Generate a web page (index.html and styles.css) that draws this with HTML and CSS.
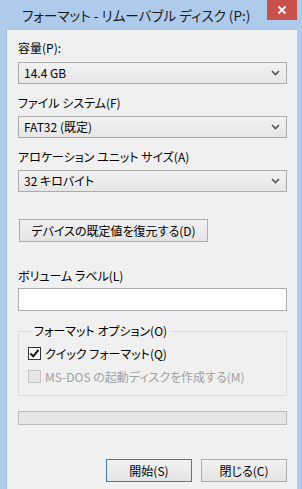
FILE: index.html
```html
<!DOCTYPE html>
<html lang="ja">
<head>
<meta charset="utf-8">
<link rel="stylesheet" href="styles.css">
</head>
<body>
<div class="window">
  <div class="titlebar">
    <div class="title">フォーマット - リムーバブル ディスク (P:)</div>
    <svg class="xbtn" width="30" height="20" viewBox="0 0 30 20"><rect x="0" y="0" width="30" height="20" fill="#c9514b"/><path d="M11.5 6.5 L18.5 13.5 M18.5 6.5 L11.5 13.5" stroke="#fff" stroke-width="1.8"/></svg>
  </div>
  <div class="client">
    <div class="label first">容量(P):</div>
    <div class="combo"><span>14.4 GB</span><svg class="chev" width="9" height="6" viewBox="0 0 9 6"><path d="M1 1 L4.5 4.5 L8 1" fill="none" stroke="#555" stroke-width="1.6"/></svg></div>
    <div class="label">ファイル システム(F)</div>
    <div class="combo"><span>FAT32 (既定)</span><svg class="chev" width="9" height="6" viewBox="0 0 9 6"><path d="M1 1 L4.5 4.5 L8 1" fill="none" stroke="#555" stroke-width="1.6"/></svg></div>
    <div class="label">アロケーション ユニット サイズ(A)</div>
    <div class="combo"><span>32 キロバイト</span><svg class="chev" width="9" height="6" viewBox="0 0 9 6"><path d="M1 1 L4.5 4.5 L8 1" fill="none" stroke="#555" stroke-width="1.6"/></svg></div>
    <div class="btn restore">デバイスの既定値を復元する(D)</div>
    <div class="label vol">ボリューム ラベル(L)</div>
    <div class="textbox"></div>
    <fieldset class="group">
      <legend>フォーマット オプション(O)</legend>
      <div class="check">
        <span class="box checked"><svg width="11" height="11" viewBox="0 0 11 11"><path d="M1.5 5.5 L4.2 8.3 L9.5 2" fill="none" stroke="#111" stroke-width="2"/></svg></span>
        <span>クイック フォーマット(Q)</span>
      </div>
      <div class="check disabled">
        <span class="box"></span>
        <span>MS-DOS の起動ディスクを作成する(M)</span>
      </div>
    </fieldset>
    <div class="progress"></div>
    <div class="actions">
      <div class="btn action default">開始(S)</div>
      <div class="btn action">閉じる(C)</div>
    </div>
  </div>
</div>
</body>
</html>
```

FILE: styles.css
```css
html, body {
  margin: 0;
  padding: 0;
}
body {
  width: 302px;
  height: 489px;
  overflow: hidden;
  background: #aecbec;
  font-family: "Noto Sans CJK JP", "Noto Sans", sans-serif;
  font-feature-settings: "palt";
  font-size: 12px;
  color: #000;
}
.window {
  display: flex;
  flex-direction: column;
  width: 302px;
  height: 489px;
}
.titlebar {
  height: 30px;
  width: 302px;
  box-sizing: border-box;
  display: flex;
  align-items: flex-start;
  justify-content: space-between;
  padding-left: 22px;
  padding-right: 5px;
  flex: none;
  background-image: linear-gradient(#c9514b, #c9514b);
  background-repeat: no-repeat;
  background-size: 30px 20px;
  background-position: 267px 0;
}
.title {
  flex: 0 1 auto;
  min-width: 0;
  overflow: hidden;
  font-size: 13.6px;
  line-height: 30px;
  color: #1a1a1a;
  white-space: nowrap;
}
.xbtn {
  flex: none;
  display: block;
}
.client {
  flex: 1;
  margin-left: 6px;
  margin-right: 5px;
  background: #f0f0f0;
  border-left: 1px solid #9dbde3;
  padding: 10px 10px 0 11px;
  display: flex;
  flex-direction: column;
  align-items: stretch;
}
.label {
  line-height: 16px;
  height: 16px;
  margin-top: 11px;
  margin-bottom: 5px;
  white-space: nowrap;
}
.label.first {
  margin-top: 0;
  margin-bottom: 6px;
}
.label.vol {
  margin-top: 26px;
  margin-bottom: 4px;
}
.combo {
  height: 22px;
  box-sizing: border-box;
  border: 1px solid #acacac;
  background: linear-gradient(#f2f2f2, #e6e6e6);
  display: flex;
  align-items: center;
  justify-content: space-between;
  padding: 0 6px 0 5px;
}
.combo span {
  line-height: 20px;
}
.btn {
  box-sizing: border-box;
  border: 1px solid #adadad;
  background: linear-gradient(#f1f1f1, #e4e4e4);
  display: flex;
  align-items: center;
  justify-content: center;
  white-space: nowrap;
}
.restore {
  margin-top: 27px;
  width: 189px;
  height: 23px;
  margin-left: 1px;
  align-self: flex-start;
}
.textbox {
  height: 23px;
  box-sizing: border-box;
  border: 1px solid #abadb3;
  background: #fff;
}
.group {
  margin: 12px 0 0 0;
  padding: 6px 9px 11px 9px;
  border: 1px solid #dcdcdc;
  min-width: 0;
}
.group legend {
  padding: 0 3px;
  margin-left: 3px;
  line-height: 16px;
}
.check {
  display: flex;
  align-items: center;
  height: 16px;
  gap: 4px;
}
.check + .check {
  margin-top: 7px;
}
.box {
  width: 13px;
  height: 13px;
  box-sizing: border-box;
  border: 1px solid #333;
  background: #fff;
  display: flex;
  align-items: center;
  justify-content: center;
  flex: none;
}
.check.disabled {
  color: #a0a0a0;
}
.check.disabled .box {
  border-color: #c6c6c6;
  background: #e6e6e6;
}
.progress {
  margin-top: 15px;
  height: 14px;
  box-sizing: border-box;
  border: 1px solid #bcbcbc;
  background: #e6e6e6;
}
.actions {
  margin-top: 34px;
  display: flex;
  justify-content: flex-end;
  gap: 9px;
}
.action {
  width: 86px;
  height: 23px;
}
.action.default {
  border-color: #3c7fb1;
}
```
